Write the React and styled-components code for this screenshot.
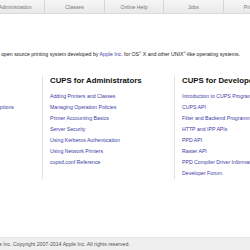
import React from 'react';
import styled, { createGlobalStyle } from 'styled-components';

const GlobalStyle = createGlobalStyle`
  html, body {
    margin: 0;
    padding: 0;
    background: #ffffff;
    overflow: hidden;
  }
  body {
    font-family: "Liberation Sans", Arial, sans-serif;
  }
`;

const Page = styled.div`
  display: flex;
  flex-direction: column;
  min-height: 250px;
  width: 420px;
  margin-left: -70px;
`;

const Nav = styled.nav`
  display: flex;
  height: 14px;
  background: linear-gradient(#f6f6f6, #e9e9e9);
  border-bottom: 1px solid #dcdcdc;
  box-sizing: border-box;
`;

const Tab = styled.a`
  flex: 0 0 ${p => p.width}px;
  display: flex;
  align-items: center;
  justify-content: center;
  font-size: 5.2px;
  color: #777;
  text-decoration: none;
  border-left: ${p => (p.first ? 'none' : '1px solid #d6d6d6')};
  box-sizing: border-box;
`;

const Intro = styled.p`
  margin: 35.5px 0 0;
  font-size: 5.2px;
  line-height: 7px;
  color: #222;
  white-space: nowrap;
`;

const Mark = styled.sup`
  font-size: 3px;
  vertical-align: 2px;
`;

const Link = styled.a`
  color: #3d3da6;
  text-decoration: none;
`;

const Columns = styled.div`
  display: grid;
  grid-template-columns: 112px 132px 132px;
  margin-top: 18.5px;
`;

const Column = styled.div`
  padding-left: ${p => (p.first ? 0 : 7)}px;
  border-left: ${p => (p.first ? 'none' : '1px solid #e2e2e2')};
  box-sizing: border-box;
`;

const Heading = styled.h2`
  margin: 0 0 4.5px;
  font-size: 7.8px;
  line-height: 10px;
  font-weight: bold;
  color: #111;
  white-space: nowrap;
`;

const LinkList = styled.ul`
  list-style: none;
  margin: 0;
  padding: 0;
`;

const Item = styled.li`
  font-size: 5.2px;
  line-height: 11px;
  white-space: nowrap;
`;

const Footer = styled.footer`
  margin-top: auto;
  margin-left: -45px;
  height: 13px;
  background: #efefef;
  border-top: 1px solid #e4e4e4;
  box-sizing: border-box;
  display: flex;
  align-items: center;
  font-size: 5.2px;
  color: #555;
  white-space: nowrap;
`;

const tabs = [
  { label: 'Home', width: 55 },
  { label: 'Administration', width: 59.4 },
  { label: 'Classes', width: 59.4 },
  { label: 'Online Help', width: 59.4 },
  { label: 'Jobs', width: 59.4 },
  { label: 'Printers', width: 59.4 },
];

const columns = [
  {
    title: 'CUPS for Users',
    links: [
      'Overview of CUPS',
      'Command-Line Printing and Options',
      "What's New in CUPS 2.0",
      'User Forum',
    ],
  },
  {
    title: 'CUPS for Administrators',
    links: [
      'Adding Printers and Classes',
      'Managing Operation Policies',
      'Printer Accounting Basics',
      'Server Security',
      'Using Kerberos Authentication',
      'Using Network Printers',
      'cupsd.conf Reference',
    ],
  },
  {
    title: 'CUPS for Developers',
    links: [
      'Introduction to CUPS Programming',
      'CUPS API',
      'Filter and Backend Programming',
      'HTTP and IPP APIs',
      'PPD API',
      'Raster API',
      'PPD Compiler Driver Information',
      'Developer Forum',
    ],
  },
];

export default function App() {
  return (
    <>
      <GlobalStyle />
      <Page>
        <Nav>
          {tabs.map((tab, i) => (
            <Tab key={tab.label} width={tab.width} first={i === 0}>
              {tab.label}
            </Tab>
          ))}
        </Nav>
        <Intro>
          CUPS is the standards-based, open source printing system developed by{' '}
          <Link>Apple Inc.</Link> for OS<Mark>®</Mark> X and other UNIX<Mark>®</Mark>-like
          operating systems.
        </Intro>
        <Columns>
          {columns.map((col, i) => (
            <Column key={col.title} first={i === 0}>
              <Heading>{col.title}</Heading>
              <LinkList>
                {col.links.map(link => (
                  <Item key={link}>
                    <Link>{link}</Link>
                  </Item>
                ))}
              </LinkList>
            </Column>
          ))}
        </Columns>
        <Footer>
          CUPS and the CUPS logo are trademarks of Apple Inc. Copyright 2007-2014 Apple Inc. All rights reserved.
        </Footer>
      </Page>
    </>
  );
}
